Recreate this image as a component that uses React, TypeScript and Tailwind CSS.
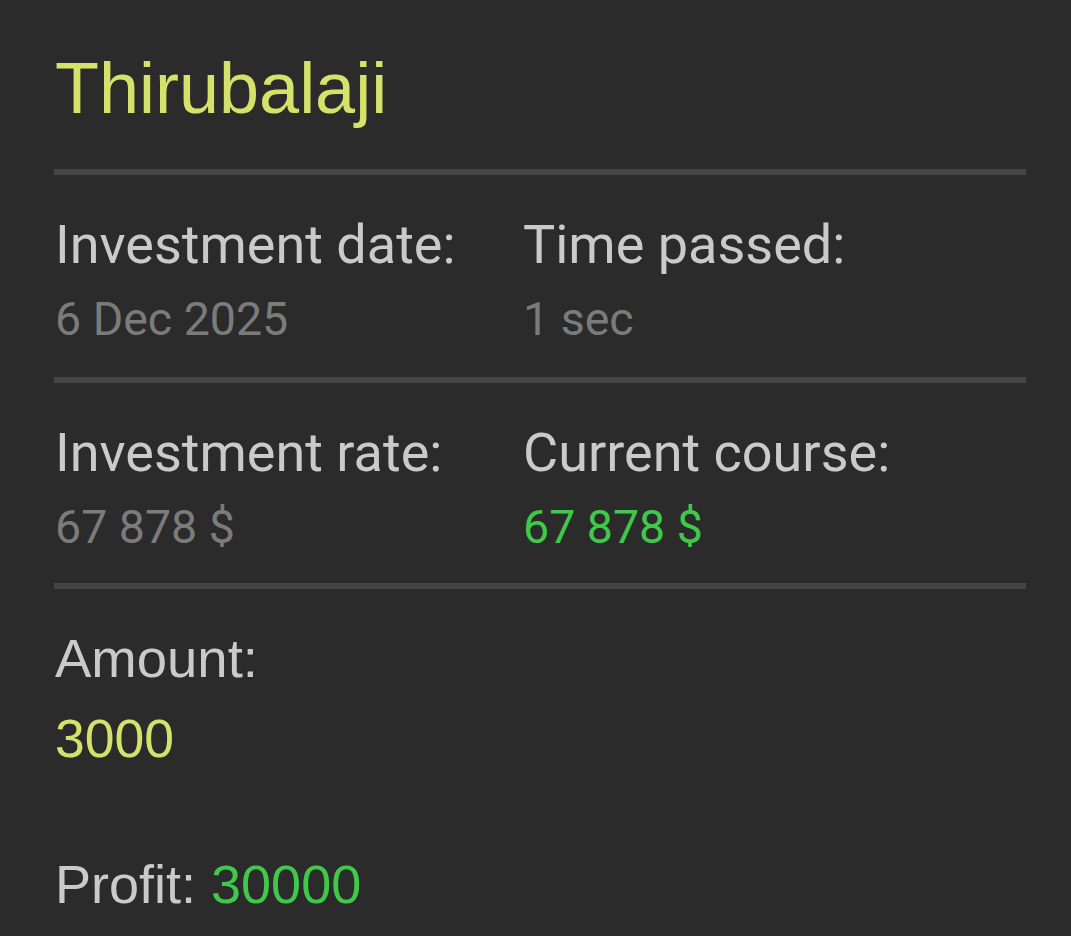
export default function App() {
  return (
    <div className="min-h-[936px] w-full bg-[#2b2b2b] overflow-hidden">
      <div className="ml-[54px] w-[972px] pt-[48px]">
        <div className="pl-[1px] text-[72px] leading-[80px] text-[#d5e26a] font-['Liberation_Sans',Arial,sans-serif]">
          Thirubalaji
        </div>
        <div className="mt-[41px] h-[6px] bg-[#454545]" />
        <Row
          a={{ label: "Investment date:", value: "6 Dec 2025", color: "text-[#7b7b7b]" }}
          b={{ label: "Time passed:", value: "1 sec", color: "text-[#7b7b7b]" }}
        />
        <div className="mt-[31px] h-[6px] bg-[#454545]" />
        <Row
          a={{ label: "Investment rate:", value: "67 878 $", color: "text-[#7b7b7b]" }}
          b={{ label: "Current course:", value: "67 878 $", color: "text-[#3fc84a]" }}
        />
        <div className="mt-[29px] h-[6px] bg-[#454545]" />
        <div className="pl-[1px] font-['Liberation_Sans',Arial,sans-serif]">
          <div className="mt-[40px] text-[54.5px] leading-[60px] text-[#cacaca]">Amount:</div>
          <div className="mt-[20px] text-[53.5px] leading-[60px] text-[#d5e26a]">3000</div>
          <div className="mt-[85px] text-[54px] leading-[60px] text-[#cacaca]">
            Profit: <span className="text-[#3fc84a]">30000</span>
          </div>
        </div>
      </div>
    </div>
  );
}

type Cell = { label: string; value: string; color: string };

function Row({ a, b }: { a: Cell; b: Cell }) {
  return (
    <div className="flex pl-[1px] font-['Roboto',sans-serif]">
      <Col cell={a} width="w-[468px]" />
      <Col cell={b} width="flex-1" />
    </div>
  );
}

function Col({ cell, width }: { cell: Cell; width: string }) {
  return (
    <div className={width}>
      <div className="mt-[40px] text-[54px] leading-[60px] text-[#cacaca]">{cell.label}</div>
      <div className={`mt-[17px] text-[46.5px] leading-[54px] ${cell.color}`}>{cell.value}</div>
    </div>
  );
}
